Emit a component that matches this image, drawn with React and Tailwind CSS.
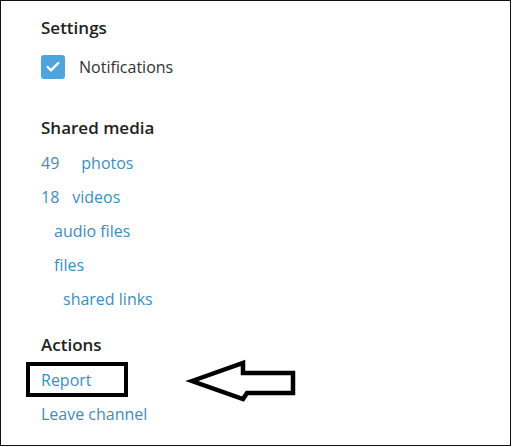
import { Check } from 'lucide-react';

const media = [
  { count: '49', label: 'photos', gap: 'gap-[22px]' },
  { count: '18', label: 'videos', gap: 'gap-[13px]' },
  { count: '', label: 'audio files', gap: 'pl-[13px]' },
  { count: '', label: 'files', gap: 'pl-[13px]' },
  { count: '', label: 'shared links', gap: 'pl-[22px]' },
];

function SectionTitle({ children, className = '' }) {
  return <h3 className={`h-6 text-[17px] font-semibold leading-6 text-[#222] ${className}`}>{children}</h3>;
}

function LinkRow({ children, className = '' }) {
  return <div className={`flex h-[34px] items-center text-[16px] text-[#3f8dbb] ${className}`}>{children}</div>;
}

export default function App() {
  return (
    <div className="relative h-[447px] w-[512px] bg-white" style={{ fontFamily: '"Open Sans", "Liberation Sans", sans-serif' }}>
      <div className="h-[446px] w-[511px] border border-[#111] pl-10 pt-[15px]">
        <SectionTitle>Settings</SectionTitle>
        <label className="mt-[15px] flex h-6 items-center gap-[14px]">
          <span className="flex h-6 w-6 items-center justify-center rounded-[3px] bg-[#4ea5dd]">
            <Check className="h-4 w-4 text-white" strokeWidth={3.5} />
          </span>
          <span className="text-[16px] text-[#333]">Notifications</span>
        </label>

        <SectionTitle className="mt-[37px]">Shared media</SectionTitle>
        <div className="mt-1.5">
          {media.map((item) => (
            <LinkRow key={item.label} className={item.gap}>
              {item.count ? <span>{item.count}</span> : null}
              <span>{item.label}</span>
            </LinkRow>
          ))}
        </div>

        <SectionTitle className="mt-[17px]">Actions</SectionTitle>
        <div className="mt-1.5">
          <LinkRow>Report</LinkRow>
          <LinkRow>Leave channel</LinkRow>
        </div>
      </div>

      {/* annotation box + arrow */}
      <div className="absolute left-[26px] top-[362px] h-[35px] w-[102px] border-[4px] border-black" />
      <svg className="absolute left-[185px] top-[355px]" width="115" height="50" viewBox="0 0 115 50">
        <path
          d="M7 26 L58 8 L58 18 L108 18 L108 38 L62 38 L58 44 Z"
          fill="none"
          stroke="#000"
          strokeWidth="4.5"
          strokeLinejoin="miter"
        />
      </svg>
    </div>
  );
}
